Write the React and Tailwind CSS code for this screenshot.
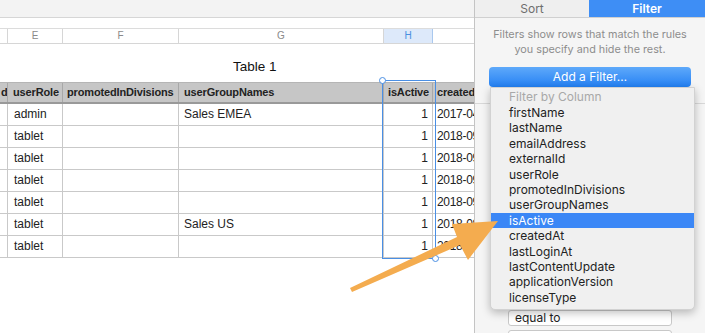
import React from 'react';

const cols = 'grid grid-cols-[8px_55px_116px_205px_49px_41px]';

const rows = [
  { role: 'admin', group: 'Sales EMEA', date: '2017-04-12' },
  { role: 'tablet', group: '', date: '2018-09-03' },
  { role: 'tablet', group: '', date: '2018-09-03' },
  { role: 'tablet', group: '', date: '2018-09-03' },
  { role: 'tablet', group: '', date: '2018-09-03' },
  { role: 'tablet', group: 'Sales US', date: '2018-08-21' },
  { role: 'tablet', group: '', date: '2018-09-03' },
];

const columns = [
  'firstName',
  'lastName',
  'emailAddress',
  'externalId',
  'userRole',
  'promotedInDivisions',
  'userGroupNames',
  'isActive',
  'createdAt',
  'lastLoginAt',
  'lastContentUpdate',
  'applicationVersion',
  'licenseType',
];

function Sheet() {
  return (
    <div className="w-[474px] shrink-0 flex flex-col bg-white font-['Liberation_Sans',Arial,sans-serif] text-[12px] text-[#222]">
      {/* toolbar */}
      <div className="h-[18px] bg-[#f3f3f3] border-b border-[#d6d6d6]" />
      <div className="h-[11px] border-b border-[#dcdcdc]" />

      {/* column letters */}
      <div className={`${cols} h-[15px] border-b border-[#d6d6d6] text-[10px] text-[#8a8a8a] leading-[14px]`}>
        <div className="border-r border-[#d6d6d6]" />
        <div className="border-r border-[#d6d6d6] text-center">E</div>
        <div className="border-r border-[#d6d6d6] text-center">F</div>
        <div className="border-r border-[#d6d6d6] text-center">G</div>
        <div className="border-r border-[#a9c8ee] bg-[#dde9fa] text-[#4a8fe0] text-center">H</div>
        <div />
      </div>

      {/* title */}
      <div className="h-[38px] flex items-center pl-[233px] pt-[8px] text-[13.5px] text-[#111]">Table 1</div>

      {/* header */}
      <div className={`${cols} h-[22px] bg-[#c6c6c6] border-t border-[#b5b5b5] border-b-2 border-b-[#999] font-bold text-[11px] tracking-[-0.15px] leading-[19px] whitespace-nowrap overflow-hidden`}>
        <div className="border-r border-[#a8a8a8] overflow-hidden pl-[1px]">d</div>
        <div className="border-r border-[#a8a8a8] pl-[5px] overflow-hidden">userRole</div>
        <div className="border-r border-[#a8a8a8] pl-[4px] overflow-hidden">promotedInDivisions</div>
        <div className="border-r border-[#a8a8a8] pl-[5px] overflow-hidden">userGroupNames</div>
        <div className="border-r border-[#a8a8a8] pl-[4px] overflow-hidden">isActive</div>
        <div className="pl-[4px] overflow-hidden">createdAt</div>
      </div>

      {rows.map((r, i) => (
        <div key={i} className={`${cols} h-[22px] border-b border-[#c9c9c9] leading-[21px] whitespace-nowrap overflow-hidden`}>
          <div className="border-r border-[#c9c9c9]" />
          <div className="border-r border-[#c9c9c9] pl-[6px]">{r.role}</div>
          <div className="border-r border-[#c9c9c9]" />
          <div className="border-r border-[#c9c9c9] pl-[5px]">{r.group}</div>
          <div className="border-r border-[#c9c9c9] pr-[4px] text-right">1</div>
          <div className="pl-[4px] overflow-hidden tracking-[-0.3px]">{r.date}</div>
        </div>
      ))}
    </div>
  );
}

function Panel() {
  return (
    <div className="relative w-[231px] shrink-0 border-l border-[#c4c4c4] bg-[#f5f5f5] font-['Inter','Liberation_Sans',sans-serif] text-[12px]">
      {/* tabs */}
      <div className="flex h-[18px] border-b border-[#d0d0d0]">
        <div className="w-[114px] bg-[#efefef] text-center text-[#6e6e6e] leading-[17px] text-[12px]">Sort</div>
        <div className="flex-1 bg-[#3e8ef5] text-center text-white font-semibold leading-[17px] text-[12px]">Filter</div>
      </div>

      <p className="pt-[9px] px-[10px] text-center text-[10.8px] leading-[15px] text-[#8d8d8d]">
        Filters show rows that match the rules
        <br />
        you specify and hide the rest.
      </p>

      <div className="mt-[10px] mx-[14px] h-[20px] rounded-[4px] bg-gradient-to-b from-[#5ea9fa] to-[#2180f3] text-white text-center leading-[20px] text-[12px]">
        Add a Filter…
      </div>

      <div className="mt-[16px] border-t border-[#d8d8d8]" />

      <div className="mt-[206px] ml-[33px] w-[164px] h-[16px] rounded-[3px] border border-[#c8c8c8] bg-white pl-[6px] leading-[14px] text-[12px] text-[#222]">
        equal to
      </div>
      <div className="mt-[4px] ml-[33px] w-[164px] h-[16px] rounded-[3px] border border-[#c8c8c8] bg-white" />

      {/* dropdown */}
      <div className="absolute left-[15px] top-[87px] w-[205px] h-[223px] rounded-b-[5px] bg-[#f0f0f0] border border-[#d2d2d2] shadow-[0_3px_8px_rgba(0,0,0,0.25)] pt-[1px]">
        <div className="pl-[18px] h-[16px] leading-[16px] text-[#a8a8a8]">Filter by Column</div>
        {columns.map((c) => (
          <div
            key={c}
            className={`pl-[18px] h-[15.4px] leading-[15.4px] ${c === 'isActive' ? 'bg-[#3b87f6] text-white' : 'text-[#222]'}`}
          >
            {c}
          </div>
        ))}
      </div>
    </div>
  );
}

export default function App() {
  return (
    <div className="relative w-[705px] h-[333px] overflow-hidden flex bg-white">
      <Sheet />
      <Panel />

      {/* selection of column H */}
      <div className="absolute left-[382px] top-[80px] w-[54px] h-[179px] border-[1.5px] border-[#4a8fe4] pointer-events-none" />
      <div className="absolute left-[379px] top-[77px] w-[7px] h-[7px] rounded-full border-[1.5px] border-[#4a8fe4] bg-white" />
      <div className="absolute left-[432px] top-[255px] w-[7px] h-[7px] rounded-full border-[1.5px] border-[#4a8fe4] bg-white" />

      {/* annotation arrow */}
      <svg className="absolute left-0 top-0" width="705" height="333" viewBox="0 0 705 333">
        <polygon
          points="350,288 352,292 460,245 468,260 498,221 452,224 457,237"
          fill="#f4ac4f"
        />
      </svg>
    </div>
  );
}
